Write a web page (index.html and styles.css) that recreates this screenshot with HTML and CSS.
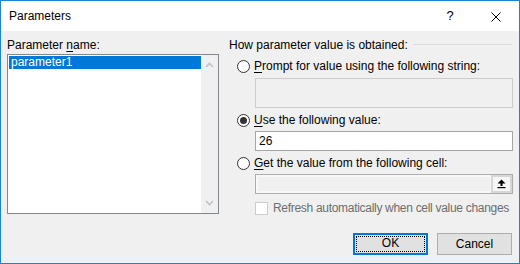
FILE: index.html
```html
<!DOCTYPE html>
<html>
<head>
<meta charset="utf-8">
<title>Parameters</title>
<link rel="stylesheet" href="styles.css">
</head>
<body>
<div class="window">
  <div class="titlebar">
    <span class="title">Parameters</span>
    <div class="caption-btns">
      <span class="cap-btn help">?</span>
      <span class="cap-btn close">
        <svg width="10" height="10" viewBox="0 0 10 10"><path d="M0.5 0.5 L9.5 9.5 M9.5 0.5 L0.5 9.5" stroke="#000" stroke-width="1" fill="none"/></svg>
      </span>
    </div>
  </div>
  <div class="body">
    <div class="main">
      <div class="left">
        <div class="label">Parameter <u>n</u>ame:</div>
        <div class="listbox">
          <div class="items">
            <div class="item selected">parameter1</div>
          </div>
          <div class="vscroll">
            <svg width="9" height="6" viewBox="0 0 9 6"><path d="M1 5 L4.5 1.5 L8 5" stroke="#c2c2c2" stroke-width="1.6" fill="none"/></svg>
            <svg width="9" height="6" viewBox="0 0 9 6"><path d="M1 1 L4.5 4.5 L8 1" stroke="#c2c2c2" stroke-width="1.6" fill="none"/></svg>
          </div>
        </div>
      </div>
      <div class="right">
        <div class="group-head"><span>How parameter value is obtained:</span><span class="rule"></span></div>
        <div class="option opt-first"><span class="radio"></span><span><u>P</u>rompt for value using the following string:</span></div>
        <div class="field field-tall field-disabled"></div>
        <div class="option"><span class="radio checked"></span><span><u>U</u>se the following value:</span></div>
        <div class="field field-text">26</div>
        <div class="option"><span class="radio"></span><span><u>G</u>et the value from the following cell:</span></div>
        <div class="field cellbox">
          <div class="cell-input"></div>
          <div class="cell-btn">
            <svg width="9" height="10" viewBox="0 0 9 10"><path d="M4.5 0.5 L8.5 4.5 L5.5 4.5 L5.5 7 L3.5 7 L3.5 4.5 L0.5 4.5 Z" fill="#000"/><rect x="0.5" y="8" width="8" height="1.2" fill="#000"/></svg>
          </div>
        </div>
        <div class="check-row"><span class="checkbox"></span><span class="disabled-text">Refresh automatically when cell value changes</span></div>
      </div>
    </div>
    <div class="footer">
      <button class="btn btn-default"><span class="focus">OK</span></button>
      <button class="btn">Cancel</button>
    </div>
  </div>
</div>
</body>
</html>
```

FILE: styles.css
```css
* { box-sizing: border-box; }
html, body { margin: 0; padding: 0; background: #f0f0f0; }
body {
  font-family: "Liberation Sans", Arial, sans-serif;
  font-size: 12px;
  color: #000;
}
.window {
  width: 520px;
  height: 264px;
  border: 1px solid #1883d7;
  background: #f0f0f0;
  display: flex;
  flex-direction: column;
}
.titlebar {
  height: 30px;
  background: #fff;
  display: flex;
  align-items: center;
  padding-left: 8px;
  line-height: 16px;
}
.title { flex: 1; }
.caption-btns { display: flex; height: 30px; }
.cap-btn {
  width: 46px;
  height: 30px;
  display: flex;
  align-items: center;
  justify-content: center;
}
.help { font-size: 13px; padding-bottom: 1px; }
.close svg { display: block; margin-top: 1px; }

.body { flex: 1; display: flex; flex-direction: column; }
.main {
  display: flex;
  padding: 6px 0 0 6px;
  white-space: nowrap;
}
.left { width: 212px; }
.label { line-height: 16px; height: 16px; }
u { text-decoration: underline; text-underline-offset: 2px; }
.listbox {
  margin-top: 1px;
  height: 160px;
  border: 1px solid #828790;
  background: #fff;
  display: flex;
}
.items { flex: 1; padding: 1px 0 0 1px; }
.item { height: 13px; line-height: 13px; padding-left: 2px; }
.item.selected { background: #0078d7; color: #fff; }
.vscroll {
  width: 17px;
  background: #f0f0f0;
  display: flex;
  flex-direction: column;
  justify-content: space-between;
  align-items: center;
  padding: 7px 0 7px 0;
}
.vscroll svg { display: block; }

.right { width: 284px; margin-left: 10px; }
.group-head {
  display: flex;
  align-items: center;
  height: 16px;
  line-height: 16px;
}
.rule {
  flex: 1;
  height: 1px;
  background: #dcdcdc;
  margin-left: 5px;
  margin-right: 1px;
  margin-bottom: 2px;
}
.option {
  display: flex;
  align-items: center;
  height: 16px;
  line-height: 16px;
  margin-top: 4px;
  margin-left: 8px;
  gap: 4px;
}
.opt-first { margin-top: 5px; }
.radio {
  width: 13px;
  height: 13px;
  border-radius: 50%;
  border: 1px solid #333;
  background: #fff;
  display: flex;
  align-items: center;
  justify-content: center;
  flex: none;
}
.radio.checked::after {
  content: "";
  width: 7px;
  height: 7px;
  border-radius: 50%;
  background: #333;
}
.field {
  margin-left: 26px;
  width: 258px;
  margin-top: 3px;
}
.field-tall { height: 30px; margin-top: 4px; }
.field-disabled { border: 1px solid #cccccc; background: #f0f0f0; }
.field-text {
  height: 20px;
  border: 1px solid #a6a6a6;
  background: #fff;
  padding-left: 3px;
  line-height: 18px;
}
.cellbox {
  height: 20px;
  border: 1px solid #adadad;
  display: flex;
}
.cell-input {
  flex: 1;
  border: 2px solid #f8f8f8;
  border-right-width: 1px;
  background: #f0f0f0;
}
.cell-btn {
  width: 21px;
  background: #f7f7f7;
  border: 2px solid #d6d6d6;
  display: flex;
  align-items: center;
  justify-content: center;
}
.cell-btn svg { display: block; }
.check-row {
  display: flex;
  align-items: center;
  height: 16px;
  line-height: 16px;
  margin-top: 6px;
  margin-left: 26px;
  gap: 5px;
}
.checkbox {
  width: 13px;
  height: 13px;
  border: 1px solid #cccccc;
  background: #fff;
  flex: none;
}
.disabled-text { color: #6d6d6d; letter-spacing: -0.3px; }

.footer {
  display: flex;
  justify-content: flex-end;
  gap: 9px;
  margin-top: 17px;
  padding-right: 7px;
}
.btn {
  appearance: none;
  -webkit-appearance: none;
  margin: 0;
  width: 75px;
  height: 22px;
  border: 1px solid #adadad;
  background: #e1e1e1;
  font: inherit;
  color: #000;
  padding: 0;
  line-height: 18px;
  text-align: center;
}
.btn-default {
  border: 2px solid #0078d7;
  padding: 1px;
  line-height: 12px;
}
.focus {
  display: block;
  height: 100%;
  border: 1px dotted #000;
  line-height: 12px;
}
```
